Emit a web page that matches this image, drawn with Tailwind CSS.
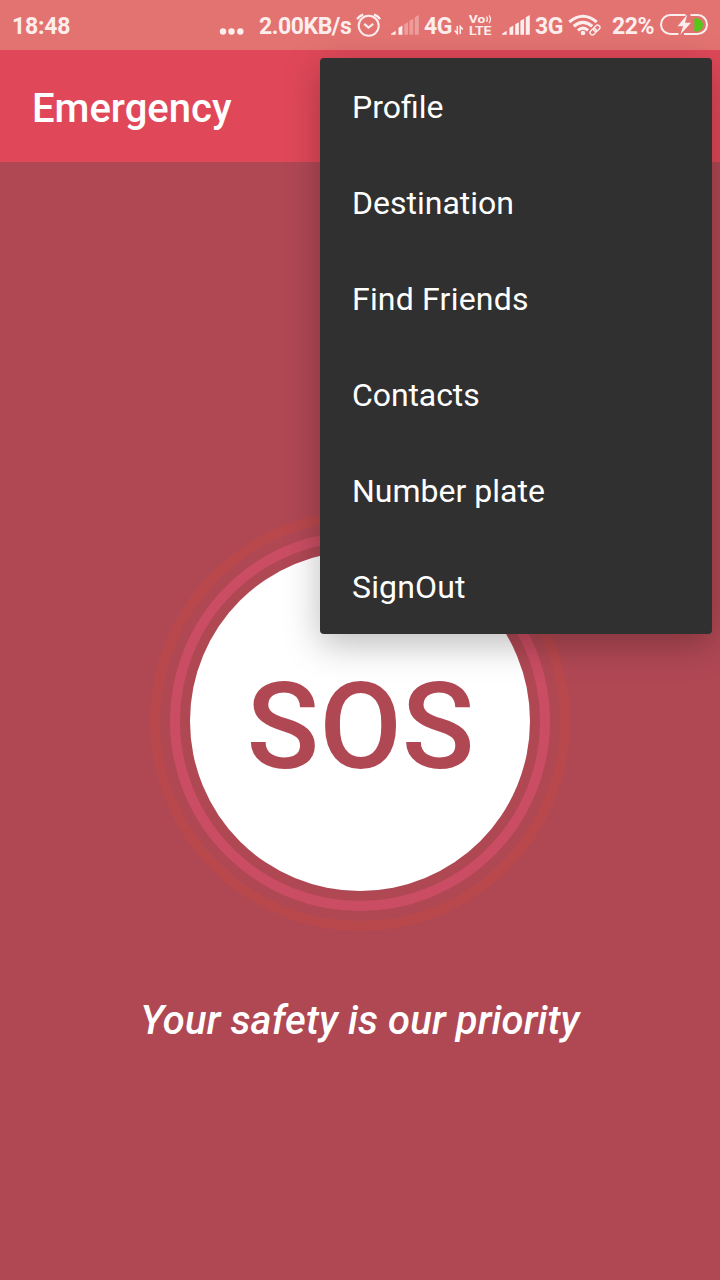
<!DOCTYPE html>
<html lang="en">
<head>
<meta charset="utf-8">
<title>Emergency</title>
<script src="https://cdn.jsdelivr.net/npm/@tailwindcss/browser@4"></script>
</head>
<body class="relative flex h-[1280px] w-[720px] flex-col overflow-hidden bg-[#b04854] font-['Roboto',sans-serif] text-white">
  <!-- status bar -->
  <div class="flex h-[50px] shrink-0 items-start bg-[#e37371] pl-[12px] text-[23px] leading-[50px] font-bold text-[#fdeeee]">
    <span class="w-[207px] pt-[2px] tracking-[-0.2px] whitespace-nowrap">18:48</span>
    <svg class="h-[50px] w-[40px] shrink-0" viewBox="219 0 40 50" fill="currentColor"><circle cx="223" cy="31.500" r="3.200"/><circle cx="231.500" cy="31.500" r="3.200"/><circle cx="240.300" cy="31.500" r="3.200"/></svg>
    <span class="w-[97px] shrink-0 pt-[2px] tracking-[-0.450px] whitespace-nowrap">2.00KB/s</span>
    <svg class="h-[50px] w-[35px] shrink-0" viewBox="356 0 35 50" fill="none" stroke="currentColor" stroke-width="2">
      <circle cx="368.700" cy="25.800" r="10"/><path d="M364.200 23.800l4.300 3.700 4.700-3.700" stroke-width="2.200"/><path d="M357.200 19.300q1.500-3 6-4.800M380 19.300q-1.500-3-6-4.800" stroke-width="2.300"/>
    </svg>
    <svg class="h-[50px] w-[33px] shrink-0" viewBox="391 0 33 50" fill="currentColor">
      <path d="M391 34.700v-1l4.700-3v4zM398.500 34.700v-7l3.900-2.200v9.200z"/><path opacity=".35" d="M404.200 34.700v-10.500l3.800-2v12.500zM409.400 34.700v-14l3.800-2v16zM414.800 34.700v-17.500l4-2.200v19.700z"/>
    </svg>
    <span class="w-[30px] shrink-0 pt-[2px] tracking-[-0.5px]">4G</span>
    <svg class="h-[50px] w-[15px] shrink-0" viewBox="454 0 15 50" fill="none" stroke="currentColor" stroke-width="1.500"><path d="M457.300 26v7.500l-2.600-3M460.300 34v-7.500l2.500 3"/></svg>
    <svg class="h-[50px] w-[33px] shrink-0" viewBox="469 0 33 50" fill="currentColor">
      <text x="468.800" y="23" font-size="11" font-weight="700" textLength="16.500" lengthAdjust="spacingAndGlyphs">Vo</text>
      <path d="M486.600 16.500q1.700 2.700 0 5.400M489 15.300q3 3.900 0 7.800" fill="none" stroke="currentColor" stroke-width="1.300"/>
      <text x="469" y="35" font-size="12" font-weight="500" textLength="22.500" lengthAdjust="spacingAndGlyphs" stroke="currentColor" stroke-width=".2">LTE</text>
    </svg>
    <svg class="h-[50px] w-[33px] shrink-0" viewBox="502 0 33 50" fill="currentColor">
      <path d="M502 34.700v-1l4.700-3v4zM509.500 34.700v-7l3.800-2.200v9.200zM515.200 34.700v-10.500l3.700-2v12.500zM520.400 34.700v-14l3.700-2v16zM525.800 34.700v-17.500l4-2.200v19.700z"/>
    </svg>
    <span class="w-[33px] shrink-0 pt-[2px] tracking-[-0.5px]">3G</span>
    <svg class="h-[50px] w-[44px] shrink-0" viewBox="568 0 44 50" fill="none" stroke="currentColor" stroke-width="3.100">
      <path d="M569.300 22q13.700-11.500 27.400 0M573.700 26.300q9.300-8 18.600 0M577.900 30.300q5.100-4.400 10.200 0"/><circle cx="583" cy="33" r="2.300" fill="currentColor" stroke="none"/>
      <path d="M588.500 35.500L596 24.500h7v11z" fill="#e37371" stroke="none"/>
      <g transform="rotate(-45 595 30)" stroke-width="1.400"><rect x="589" y="27.700" width="7" height="4.600" rx="2.300"/><rect x="594" y="27.700" width="7" height="4.600" rx="2.300"/></g>
    </svg>
    <span class="w-[48px] shrink-0 pt-[2px] tracking-[-0.4px]">22%</span>
    <svg class="h-[50px] w-[50px] shrink-0" viewBox="660 0 50 50" fill="none" stroke="currentColor" stroke-width="2">
      <path d="M685.500 15H670.500a9.500 9.500 0 0 0 0 19h8M690.500 15H697.500a9.500 9.500 0 0 1 0 19H684"/>
      <path d="M694.300 18.300h1.700c4 0 7 3 7 6.700s-3 6.500-7 6.500h-1.700z" fill="#56c61b" stroke="none"/>
      <path d="M687.300 14.500l-9.800 11.700h5.700l-3 8.500 10.800-12h-6z" fill="currentColor" stroke="none"/>
    </svg>
  </div>
  <!-- app bar -->
  <header class="flex h-[112px] shrink-0 items-center bg-[#e04859] px-8">
    <h1 class="pt-[5px] text-[40px] leading-[48px] font-medium">Emergency</h1>
  </header>
  <main class="flex flex-col items-center pt-[349px]">
    <div class="flex size-[420px] items-center justify-center rounded-full border-10 border-[#b9484d]">
      <div class="flex size-[380px] shrink-0 items-center justify-center rounded-full border-10 border-[#ca4d63]">
        <div class="flex size-[340px] shrink-0 items-center justify-center rounded-full bg-white pt-[12px] pl-px text-[120px] leading-[140px] font-medium text-[#b04854]">SOS</div>
      </div>
    </div>
    <p class="mt-[66px] text-[40px] leading-[48px] font-medium tracking-[0.120px] italic">Your safety is our priority</p>
  </main>
  <!-- overflow menu -->
  <nav class="absolute top-[58px] left-[320px] flex h-[576px] w-[392px] flex-col rounded-[4px] bg-[#303030] pt-px text-[32px] leading-[96px] shadow-[0_10px_36px_rgba(0,0,0,0.27)]">
    <a class="h-24 shrink-0 px-8">Profile</a>
    <a class="h-24 shrink-0 px-8">Destination</a>
    <a class="h-24 shrink-0 px-8 tracking-[0.2px]">Find Friends</a>
    <a class="h-24 shrink-0 px-8 tracking-[-0.1px]">Contacts</a>
    <a class="h-24 shrink-0 px-8">Number plate</a>
    <a class="h-24 shrink-0 px-8 tracking-[0.150px]">SignOut</a>
  </nav>
</body>
</html>
